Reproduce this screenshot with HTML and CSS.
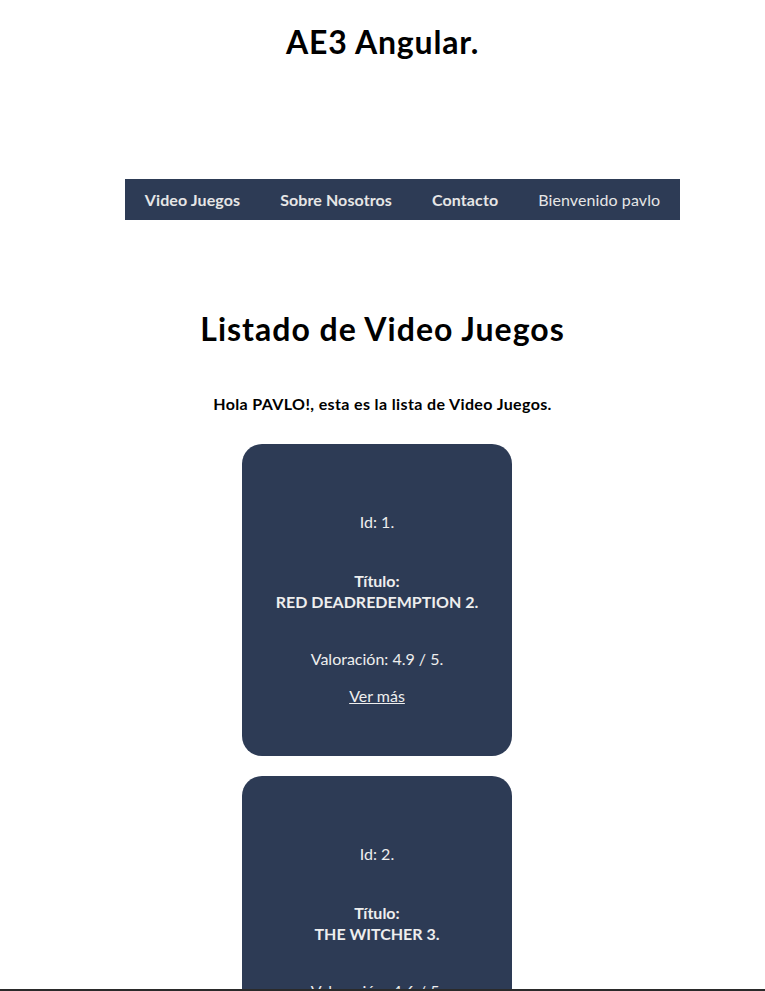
FILE: index.html
```html
<!DOCTYPE html>
<html lang="es">
<head>
<meta charset="utf-8">
<title>AE3 Angular</title>
<link rel="stylesheet" href="styles.css">
</head>
<body>
  <header class="site-header">
    <h1 class="site-title">AE3 Angular.</h1>
    <nav class="nav-wrap">
      <ul class="nav-bar">
        <li><a class="nav-link" href="#">Video Juegos</a></li>
        <li><a class="nav-link" href="#">Sobre Nosotros</a></li>
        <li><a class="nav-link" href="#">Contacto</a></li>
        <li><span class="nav-user">Bienvenido pavlo</span></li>
      </ul>
    </nav>
  </header>

  <main class="content">
    <h1 class="page-title">Listado de Video Juegos</h1>
    <p class="greeting">Hola PAVLO!, esta es la lista de Video Juegos.</p>

    <div class="card-list">
      <article class="card">
        <p class="card-id">Id: 1.</p>
        <p class="card-title">Título:<br>RED DEADREDEMPTION 2.</p>
        <p class="card-rating">Valoración: 4.9 / 5.</p>
        <a class="card-link" href="#">Ver más</a>
      </article>
      <article class="card">
        <p class="card-id">Id: 2.</p>
        <p class="card-title">Título:<br>THE WITCHER 3.</p>
        <p class="card-rating">Valoración: 4.6 / 5.</p>
        <a class="card-link" href="#">Ver más</a>
      </article>
    </div>
  </main>

  <div class="bottom-line"></div>
</body>
</html>
```

FILE: styles.css
```css
* { box-sizing: border-box; }

html, body {
  margin: 0;
  padding: 0;
  background: #ffffff;
}

body {
  font-family: Lato, "Noto Sans", Arial, sans-serif;
  color: #000;
  font-size: 16px;
  line-height: 21px;
}

.site-header {
  display: flex;
  flex-direction: column;
  align-items: center;
}

.site-title {
  margin: 22px 0 0;
  font-size: 32px;
  line-height: 40px;
  font-weight: 700;
  letter-spacing: 0.8px;
}

.nav-wrap {
  margin-top: 117px;
  display: flex;
  justify-content: center;
  width: 100%;
}

.nav-bar {
  list-style: none;
  margin: 0;
  padding: 0;
  margin-left: 40px;
  display: flex;
  background: #2d3b55;
  height: 41px;
  align-items: center;
}

.nav-link,
.nav-user {
  display: block;
  padding: 0 20px;
  color: #e6e6e6;
  text-decoration: none;
  font-size: 16px;
  letter-spacing: 0.1px;
}

.nav-link { font-weight: 700; }
.nav-user { font-weight: 400; }

.content {
  display: flex;
  flex-direction: column;
  align-items: center;
}

.page-title {
  margin: 89px 0 0;
  font-size: 32px;
  line-height: 40px;
  font-weight: 700;
  letter-spacing: 1px;
}

.greeting {
  margin: 44px 0 0;
  font-weight: 700;
  letter-spacing: 0.37px;
}

.card-list {
  margin-top: 30px;
  display: flex;
  flex-direction: column;
  align-items: center;
  gap: 20px;
  padding-right: 11px;
  width: 100%;
}

.card {
  width: 270px;
  background: #2d3b55;
  border-radius: 20px;
  color: #eeeeee;
  text-align: center;
  padding: 67px 10px 50px;
  display: flex;
  flex-direction: column;
  align-items: center;
}

.card p { margin: 0; }

.card-title {
  margin-top: 38px !important;
  font-weight: 700;
  line-height: 21px;
}

.card-rating {
  margin-top: 36px !important;
}

.card-link {
  margin-top: 16px;
  color: #eeeeee;
  text-decoration: underline;
}

.bottom-line {
  position: fixed;
  left: 0;
  right: 0;
  bottom: 0;
  height: 2px;
  background: #2a2a2a;
}
```
